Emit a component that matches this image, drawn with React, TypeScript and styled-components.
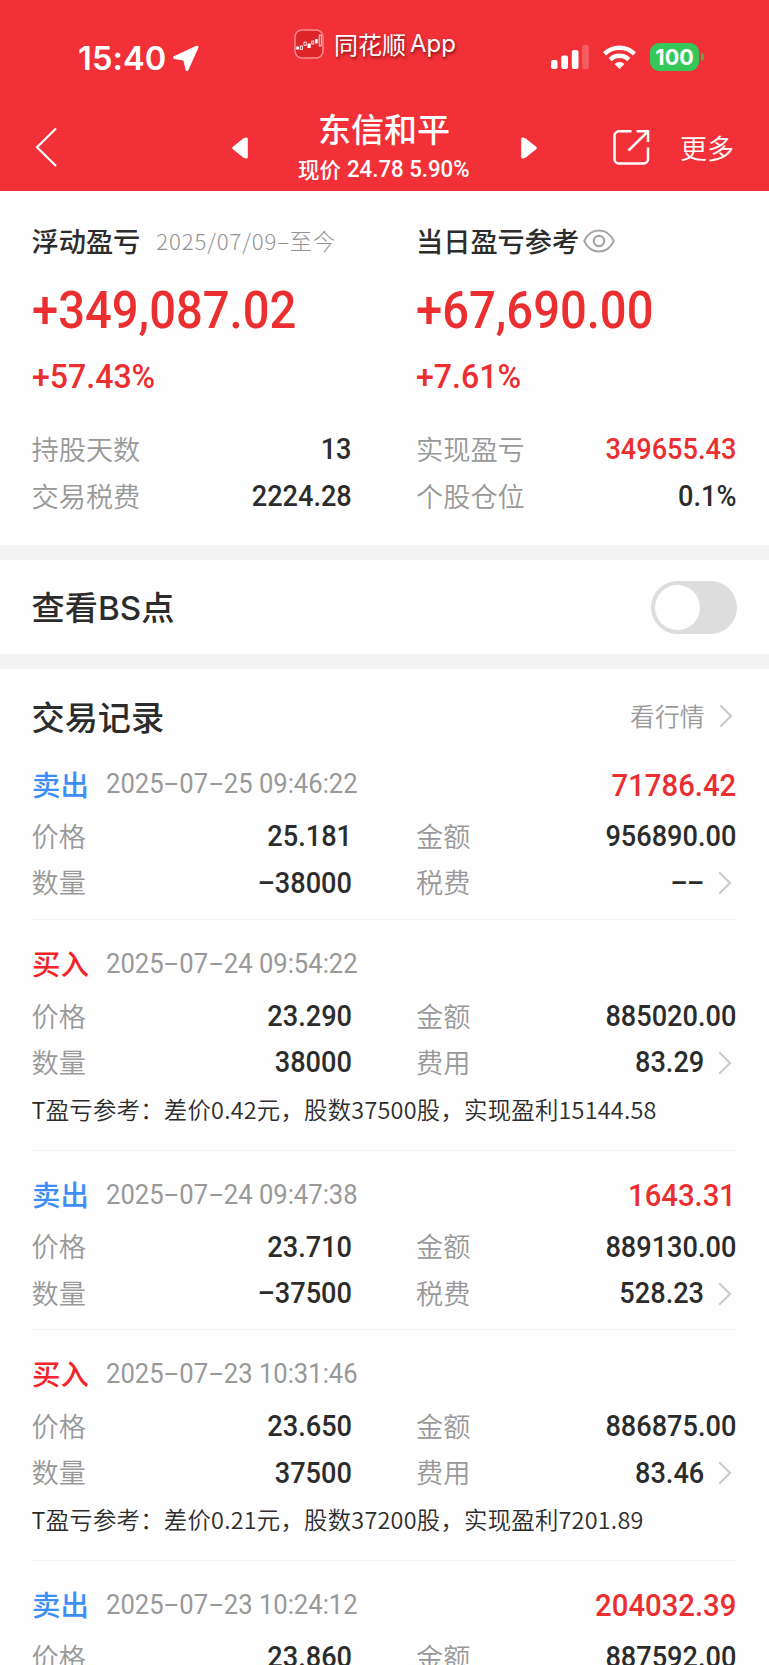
import React from 'react';
import styled, { createGlobalStyle } from 'styled-components';

const RED = '#eb2f31';
const BLUE = '#3d8ff5';
const INK = '#2c2c2c';
const MUTED = '#999';

const GlobalStyle = createGlobalStyle`
  * { box-sizing: border-box; }
  body {
    margin: 0;
    background: #fefefe;
    color: ${INK};
    font-family: 'Noto Sans CJK SC', 'Noto Sans', sans-serif;
  }
`;

const Screen = styled.div`
  width: 769px;
  height: 1665px;
  overflow: hidden;
  display: flex;
  flex-direction: column;
  background: #fefefe;
`;

/* ---------- header ---------- */

const Header = styled.header`
  flex: none;
  height: 191px;
  background: #f23038;
  color: #fff;
`;

const StatusBar = styled.div`
  height: 105px;
  display: grid;
  grid-template-columns: 294px 1fr 218px;
`;

const Clock = styled.div`
  display: flex;
  align-items: center;
  gap: 6px;
  height: 40px;
  margin-top: 38px;
  padding-left: 78px;
  font: 600 32.6px/40px Inter, sans-serif;
  letter-spacing: 0.1px;
`;

const AppBadge = styled.div`
  display: flex;
  align-items: center;
  height: 32px;
  margin-top: 28px;
  gap: 10px;
  font-size: 24px;
  line-height: 32px;
  text-shadow: 1px 2px 3px rgba(70, 0, 0, 0.65);
`;

const AppName = styled.span`
  display: flex;
  gap: 4px;
  padding-bottom: 1px;
  font-weight: 400;
  white-space: nowrap;
`;

const Latin = styled.span`
  font-family: Inter, sans-serif;
`;

const Indicators = styled.div`
  display: flex;
  align-items: center;
  height: 28px;
  margin-top: 43px;
`;

const WifiSlot = styled.div`
  display: flex;
  margin: 0 14px;
`;

const Battery = styled.div`
  display: flex;
  align-items: center;
`;

const BatteryBody = styled.div`
  width: 49px;
  height: 28px;
  border-radius: 9px;
  background: #34c759;
  text-align: center;
  font: 700 21.5px/29px Inter, sans-serif;
`;

const BatteryNub = styled.div`
  width: 3px;
  height: 8px;
  margin-left: 2px;
  border-radius: 0 3px 3px 0;
  background: #55a84f;
`;

const NavBar = styled.div`
  height: 86px;
  display: flex;
  align-items: flex-start;
`;

const BackSlot = styled.div`
  width: 232px;
  padding: 22px 0 0 35px;
`;

const ArrowSlot = styled.div`
  width: 16px;
  padding-top: 32px;
`;

const TitleBlock = styled.div`
  width: 273px;
  display: flex;
  flex-direction: column;
  align-items: center;
  padding-right: 1px;
`;

const Title = styled.h1`
  margin: 3px 0 0;
  font-size: 33px;
  line-height: 40px;
  font-weight: 450;
`;

const Subtitle = styled.div`
  display: flex;
  align-items: center;
  gap: 6px;
  width: 172px;
  height: 30px;
  margin-top: 7px;
  font-size: 21.5px;
  line-height: 28px;
  font-weight: 450;
  white-space: nowrap;
`;

const SubtitleLabel = styled.span`
  padding-bottom: 3px;
`;

const ShareSlot = styled.div`
  margin-left: 76px;
  padding-top: 24px;
`;

const More = styled.span`
  margin-left: 30px;
  padding-top: 23px;
  font-size: 27px;
  line-height: 40px;
  font-weight: 350;
`;

/* ---------- figures ---------- */

const Figure = styled.span<{
  $size?: number;
  $color?: string;
  $weight?: number;
  $narrow?: number;
  $from?: 'left' | 'right';
}>`
  display: inline-block;
  font-family: Roboto, sans-serif;
  font-size: ${(p) => p.$size ?? 29.5}px;
  font-weight: ${(p) => p.$weight ?? 500};
  color: ${(p) => p.$color ?? INK};
  line-height: 1;
  white-space: nowrap;
  transform: scaleX(${(p) => p.$narrow ?? 0.92});
  transform-origin: ${(p) => p.$from ?? 'right'} center;
`;

const DashCell = styled.span`
  display: inline-block;
  width: 0.615em;
  text-align: center;
  transform: translateY(-0.05em) scaleX(1.9);
`;

const dashed = (text: string) =>
  text.split(/(-)/).map((part, i) => (part === '-' ? <DashCell key={i}>-</DashCell> : part));

/* ---------- summary ---------- */

const Columns = styled.div`
  display: grid;
  grid-template-columns: 320.5px 320px;
  column-gap: 64px;
`;

const Summary = styled.section`
  flex: none;
  height: 354px;
  padding: 27px 32px 0 31.5px;
`;

const SummaryHead = styled.div`
  display: flex;
  align-items: center;
  height: 45px;
`;

const SummaryTitle = styled.h2`
  margin: 0 4px 0 0;
  padding-bottom: 2px;
  font-size: 27.2px;
  font-weight: 500;
  line-height: 42px;
`;

const Period = styled.span`
  margin-left: 12px;
  padding-bottom: 2px;
  font-size: 22.2px;
  font-weight: 320;
  letter-spacing: 0.85px;
  color: #939393;
  white-space: nowrap;
`;

const Profit = styled.div`
  display: flex;
  align-items: center;
  height: 60px;
  margin-top: 18px;
`;

const Percent = styled.div`
  display: flex;
  align-items: center;
  height: 40px;
  margin: 15px 0 31px;
`;

const Row = styled.div`
  display: flex;
  align-items: center;
  justify-content: space-between;
  height: 46.4px;
`;

const Label = styled.span`
  padding-bottom: 4px;
  font-size: 27.2px;
  font-weight: 330;
  line-height: 40px;
  color: ${MUTED};
`;

const ValueWithArrow = styled.span`
  display: flex;
  align-items: center;
  gap: 13.5px;
  padding-right: 4px;
`;

const Band = styled.div`
  flex: none;
  height: 15px;
  background: #f4f4f4;
`;

const SwitchRow = styled.section`
  flex: none;
  height: 94px;
  display: flex;
  align-items: center;
  justify-content: space-between;
  padding: 0 32px 0 31.5px;
`;

const SectionTitle = styled.h2`
  margin: 0;
  padding-bottom: 1px;
  font-size: 33.2px;
  font-weight: 480;
  line-height: 44px;
`;

const SwitchTrack = styled.button`
  width: 86px;
  height: 53px;
  padding: 4px;
  border: 0;
  border-radius: 27px;
  background: #ddd;
`;

const SwitchKnob = styled.span`
  display: block;
  width: 45px;
  height: 45px;
  border-radius: 50%;
  background: #fff;
`;

/* ---------- records ---------- */

const Records = styled.section`
  padding: 0 32px 0 31.5px;
`;

const RecordsHead = styled.div`
  display: flex;
  align-items: center;
  justify-content: space-between;
  height: 94.600px;
`;

const QuoteLink = styled.span`
  display: flex;
  align-items: center;
  gap: 14px;
  padding-right: 4.500px;
  font-size: 24.800px;
  font-weight: 330;
  line-height: 34px;
  color: ${MUTED};

  span { padding-bottom: 2px; }
`;

const Record = styled.article<{ $first: boolean }>`
  padding-top: ${(p) => (p.$first ? 0 : 23)}px;
  border-bottom: 1px solid #f3f3f3;
`;

const RecordHead = styled.div`
  display: flex;
  align-items: center;
  height: 42px;
  margin-bottom: 8.200px;
`;

const Side = styled.span<{ $sell: boolean }>`
  width: 74.500px;
  padding-left: 0.500px;
  padding-bottom: 2px;
  font-size: 28.400px;
  font-weight: 480;
  line-height: 40px;
  color: ${(p) => (p.$sell ? BLUE : '#f4232a')};
`;

const Amount = styled.span`
  margin-left: auto;
  padding-right: 1px;
  display: flex;
`;

const Note = styled.p`
  height: 40px;
  margin: 3px 0 20.800px;
  font-size: 23.400px;
  font-weight: 350;
  letter-spacing: 0.240px;
  line-height: 40px;
  white-space: nowrap;
`;

const RecordEnd = styled.div`
  height: 12.600px;
`;

/* ---------- icons ---------- */

const Chevron = () => (
  <svg width="14" height="24" viewBox="0 0 14 24" fill="none" stroke="#ccc" strokeWidth="2.2">
    <path d="M1.2 1.2 12 12 1.2 22.8" />
  </svg>
);

const LocationArrow = () => (
  <svg width="27" height="27" viewBox="0 0 27 27" fill="#fff" stroke="#fff" strokeWidth="3" strokeLinejoin="round">
    <path d="M25 2.2 2.5 12.5 12.7 14.2 15 24.6Z" />
  </svg>
);

const AppIcon = () => (
  <svg width="30" height="30" viewBox="0 0 30 30">
    <rect x="1" y="1" width="28" height="28" rx="7" fill="#de2329" stroke="#f58d8f" strokeWidth="1.5" />
    <g fill="#fff">
      <rect x="2.2" y="17.5" width="3" height="3" />
      <rect x="13.5" y="14.5" width="3.2" height="4.5" />
      <rect x="21.2" y="10" width="2.5" height="4.5" />
    </g>
    <g fill="none" stroke="#fff" strokeWidth="0.8">
      <rect x="6.5" y="17" width="2" height="3.5" />
      <rect x="10" y="13" width="2.2" height="3.5" />
      <rect x="17.8" y="12" width="2" height="3" />
      <rect x="25.2" y="6" width="2" height="11" />
    </g>
  </svg>
);

const SignalIcon = () => (
  <svg width="38" height="24" viewBox="0 0 38 24" fill="#fff">
    <rect x="0" y="15" width="6.5" height="9" rx="2" />
    <rect x="10.3" y="10.5" width="6.7" height="13.5" rx="2" />
    <rect x="20.8" y="5" width="6.7" height="19" rx="2" />
    <rect x="31.2" y="0" width="6.7" height="24" rx="2" opacity="0.22" />
  </svg>
);

const WifiIcon = () => (
  <svg width="33" height="24" viewBox="0 0 33 24">
    <g fill="none" stroke="#fff" strokeWidth="4.4">
      <path d="M1.6 8.8A21.5 21.5 0 0 1 31.4 8.8" />
      <path d="M7.2 14.6A13.3 13.3 0 0 1 25.8 14.6" />
    </g>
    <path d="M11.6 19A7 7 0 0 1 21.4 19L16.5 24Z" fill="#fff" />
  </svg>
);

const BackIcon = () => (
  <svg width="23" height="40" viewBox="0 0 23 40" fill="none" stroke="#fff" strokeWidth="2.2">
    <path d="M21 1.5 2 20.3 21 39" />
  </svg>
);

const PrevIcon = () => (
  <svg width="16" height="22" viewBox="0 0 16 22" fill="#fff" stroke="#fff" strokeWidth="3" strokeLinejoin="round">
    <path d="M14.3 2V20L12.5 19.5 1.8 11 12.5 2.5Z" />
  </svg>
);

const NextIcon = () => (
  <svg width="16" height="22" viewBox="0 0 16 22" fill="#fff" stroke="#fff" strokeWidth="3" strokeLinejoin="round">
    <path d="M1.7 2V20L3.5 19.5 14.2 11 3.5 2.5Z" />
  </svg>
);

const ShareIcon = () => (
  <svg width="37" height="37" viewBox="0 0 37 37" fill="none" stroke="#fff" strokeWidth="2.5">
    <path d="M18.5 2.3H6a4.500 4.500 0 0 0-4.500 4.500V30A4.500 4.500 0 0 0 6 34.500H30.500A4.500 4.500 0 0 0 35 30V18.500" />
    <path d="M23.5 2.3H35V13" />
    <path d="M35 2.3 15.5 21.5" />
  </svg>
);

const EyeIcon = () => (
  <svg width="32" height="24" viewBox="0 0 32 24" fill="none" stroke="#a6a6a6">
    <path d="M1.2 12C4.500 5 9.500 1.500 16 1.500S27.500 5 30.800 12C27.500 19 22.500 22.500 16 22.500S4.500 19 1.200 12Z" strokeWidth="1.9" />
    <circle cx="16" cy="12" r="5.2" strokeWidth="2.2" />
  </svg>
);

/* ---------- data ---------- */

interface Trade {
  sell: boolean;
  time: string;
  result?: string;
  price: string;
  total: string;
  count?: string;
  fee?: string;
  note?: string;
}

const trades: Trade[] = [
  { sell: true, time: '2025-07-25 09:46:22', result: '71786.42', price: '25.181', total: '956890.00', count: '-38000', fee: '--' },
  { sell: false, time: '2025-07-24 09:54:22', price: '23.290', total: '885020.00', count: '38000', fee: '83.29', note: 'T盈亏参考：差价0.42元，股数37500股，实现盈利15144.58' },
  { sell: true, time: '2025-07-24 09:47:38', result: '1643.31', price: '23.710', total: '889130.00', count: '-37500', fee: '528.23' },
  { sell: false, time: '2025-07-23 10:31:46', price: '23.650', total: '886875.00', count: '37500', fee: '83.46', note: 'T盈亏参考：差价0.21元，股数37200股，实现盈利7201.89' },
  { sell: true, time: '2025-07-23 10:24:12', result: '204032.39', price: '23.860', total: '887592.00' },
];

const TradeRecord = ({ trade, first }: { trade: Trade; first: boolean }) => (
  <Record $first={first}>
    <RecordHead>
      <Side $sell={trade.sell}>{trade.sell ? '卖出' : '买入'}</Side>
      <Figure $size={28.5} $weight={400} $color={MUTED} $narrow={0.898} $from="left">{dashed(trade.time)}</Figure>
      {trade.result && (
        <Amount>
          <Figure $size={32} $color={RED} $narrow={0.915}>{trade.result}</Figure>
        </Amount>
      )}
    </RecordHead>
    <Columns>
      <Row><Label>价格</Label><Figure>{trade.price}</Figure></Row>
      <Row><Label>金额</Label><Figure>{trade.total}</Figure></Row>
      {trade.count && trade.fee && (
        <>
          <Row><Label>数量</Label><Figure>{dashed(trade.count)}</Figure></Row>
          <Row>
            <Label>{trade.sell ? '税费' : '费用'}</Label>
            <ValueWithArrow><Figure>{dashed(trade.fee)}</Figure><Chevron /></ValueWithArrow>
          </Row>
        </>
      )}
    </Columns>
    {trade.note ? <Note>{trade.note}</Note> : <RecordEnd />}
  </Record>
);

export default function App() {
  return (
    <Screen>
      <GlobalStyle />
      <Header>
        <StatusBar>
          <Clock>15:40<LocationArrow /></Clock>
          <AppBadge>
            <AppIcon />
            <AppName>同花顺<Latin>App</Latin></AppName>
          </AppBadge>
          <Indicators>
            <SignalIcon />
            <WifiSlot><WifiIcon /></WifiSlot>
            <Battery><BatteryBody>100</BatteryBody><BatteryNub /></Battery>
          </Indicators>
        </StatusBar>
        <NavBar>
          <BackSlot><BackIcon /></BackSlot>
          <ArrowSlot><PrevIcon /></ArrowSlot>
          <TitleBlock>
            <Title>东信和平</Title>
            <Subtitle>
              <SubtitleLabel>现价</SubtitleLabel>
              <Figure $size={23.5} $color="#fff" $narrow={0.945} $from="left">24.78 5.90%</Figure>
            </Subtitle>
          </TitleBlock>
          <ArrowSlot><NextIcon /></ArrowSlot>
          <ShareSlot><ShareIcon /></ShareSlot>
          <More>更多</More>
        </NavBar>
      </Header>

      <Summary>
        <Columns>
          <div>
            <SummaryHead><SummaryTitle>浮动盈亏</SummaryTitle><Period>2025/07/09–至今</Period></SummaryHead>
            <Profit><Figure $size={52} $color={RED} $narrow={0.907} $from="left">+349,087.02</Figure></Profit>
            <Percent><Figure $size={34} $color={RED} $narrow={0.943} $from="left">+57.43%</Figure></Percent>
            <Row><Label>持股天数</Label><Figure>13</Figure></Row>
            <Row><Label>交易税费</Label><Figure>2224.28</Figure></Row>
          </div>
          <div>
            <SummaryHead><SummaryTitle>当日盈亏参考</SummaryTitle><EyeIcon /></SummaryHead>
            <Profit><Figure $size={52} $color={RED} $narrow={0.907} $from="left">+67,690.00</Figure></Profit>
            <Percent><Figure $size={34} $color={RED} $narrow={0.943} $from="left">+7.61%</Figure></Percent>
            <Row><Label>实现盈亏</Label><Figure $color={RED}>349655.43</Figure></Row>
            <Row><Label>个股仓位</Label><Figure>0.1%</Figure></Row>
          </div>
        </Columns>
      </Summary>
      <Band />
      <SwitchRow>
        <SectionTitle>查看<Latin>BS</Latin>点</SectionTitle>
        <SwitchTrack><SwitchKnob /></SwitchTrack>
      </SwitchRow>
      <Band />
      <Records>
        <RecordsHead>
          <SectionTitle>交易记录</SectionTitle>
          <QuoteLink><span>看行情</span><Chevron /></QuoteLink>
        </RecordsHead>
        {trades.map((t, i) => <TradeRecord key={t.time} trade={t} first={i === 0} />)}
      </Records>
    </Screen>
  );
}
